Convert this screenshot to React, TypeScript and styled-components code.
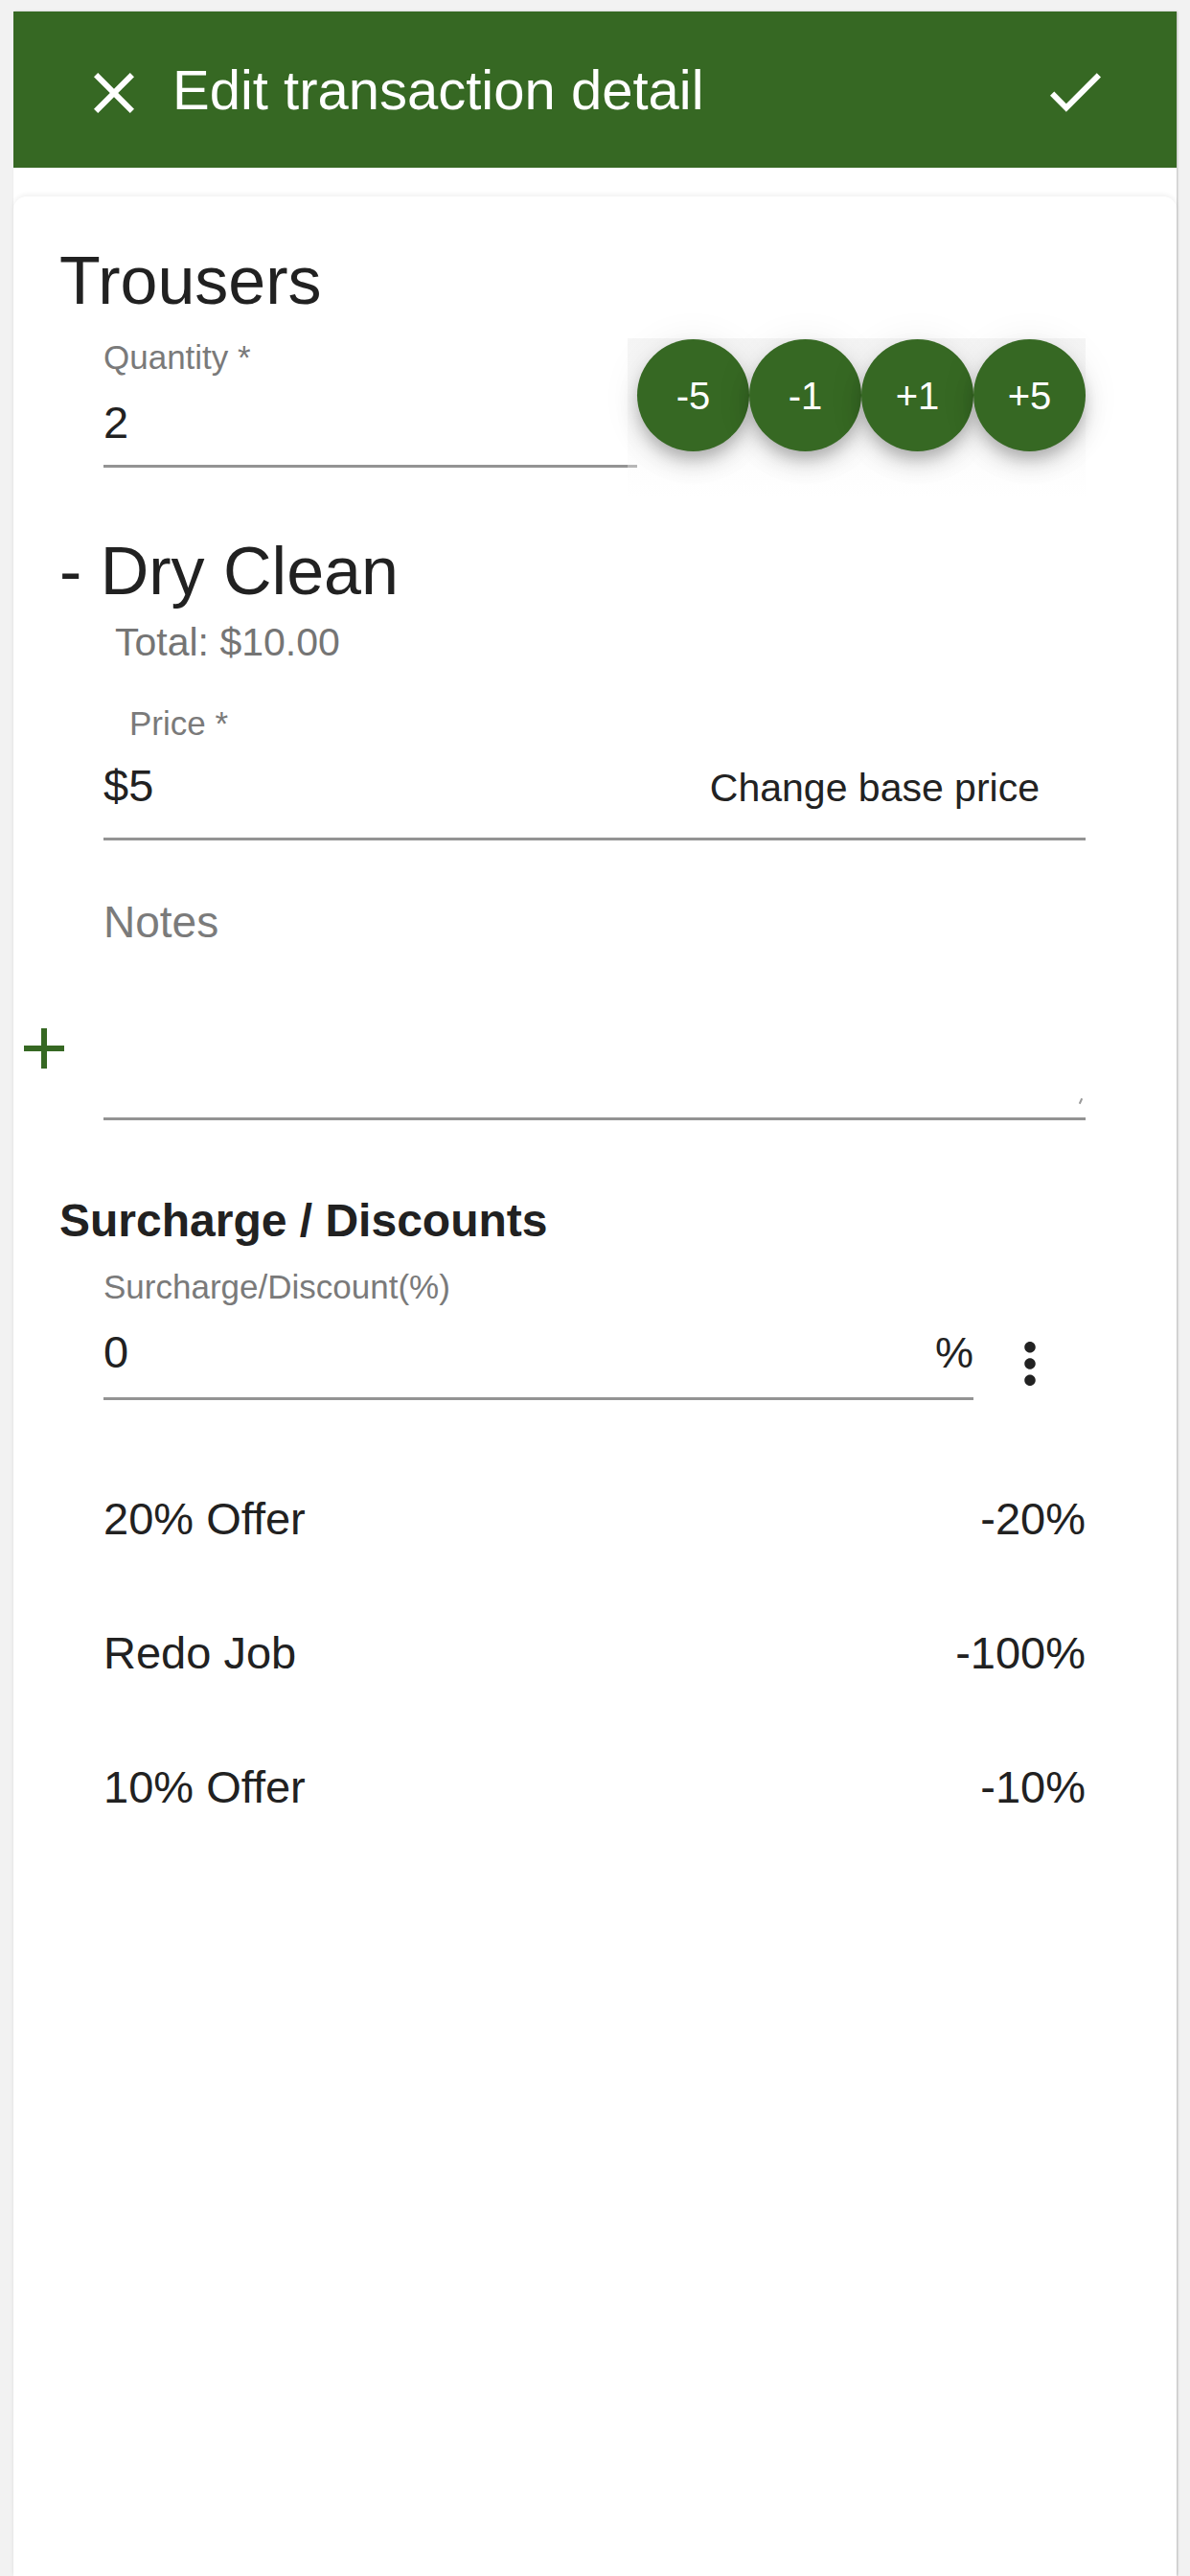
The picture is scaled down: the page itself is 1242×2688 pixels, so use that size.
import React from "react";
import styled, { createGlobalStyle } from "styled-components";

const GREEN = "#366823";

const Global = createGlobalStyle`
  html, body {
    margin: 0;
    padding: 0;
    background: #f2f2f2;
    font-family: "Liberation Sans", Arial, Helvetica, sans-serif;
    color: #212121;
  }
  * { box-sizing: border-box; }
`;

const Page = styled.div`
  min-height: 2688px;
  padding: 12px 14px 0;
  display: flex;
  flex-direction: column;
`;

const Shell = styled.div`
  flex: 1;
  background: #fff;
  display: flex;
  flex-direction: column;
  box-shadow: 1px 0 2px rgba(0, 0, 0, 0.22);
`;

const Header = styled.header`
  height: 163px;
  background: ${GREEN};
  display: flex;
  align-items: center;
  padding: 0 79px 0 84px;
  color: #fff;
`;

const IconButton = styled.button<{ $mt?: number }>`
  border: 0;
  background: none;
  padding: 0;
  margin: ${(p) => p.$mt ?? 0}px 0 0 0;
  display: flex;
  cursor: pointer;
  color: inherit;
`;

const Title = styled.h1`
  flex: 1;
  margin: 0 0 0 40px;
  font-size: 58px;
  line-height: 1;
  font-weight: 400;
  color: #fff;
`;

const Card = styled.main`
  flex: 1;
  margin-top: 30px;
  background: #fff;
  border-radius: 14px 14px 0 0;
  box-shadow: 0 -2px 5px rgba(0, 0, 0, 0.06);
  padding: 48px 48px 40px 48px;
  display: flex;
  flex-direction: column;
`;

const ItemTitle = styled.h2<{ $mt?: number }>`
  margin: ${(p) => p.$mt ?? 0}px 0 0 0;
  font-size: 70px;
  line-height: 80px;
  font-weight: 400;
  color: #212121;
`;

const SectionTitle = styled.h3`
  margin: 77px 0 0 0;
  font-size: 48px;
  line-height: 56px;
  font-weight: 700;
  color: #212121;
`;

const Total = styled.div`
  margin: 10px 0 0 58px;
  font-size: 41px;
  line-height: 48px;
  color: #757575;
`;

const FieldRow = styled.div<{ $mt: number }>`
  margin-top: ${(p) => p.$mt}px;
  padding: 0 47px 0 46px;
  display: flex;
  align-items: flex-start;
`;

const Field = styled.div`
  flex: 1;
  min-width: 0;
  display: flex;
  flex-direction: column;
`;

const Label = styled.label<{ $indent?: number }>`
  display: block;
  padding-left: ${(p) => p.$indent ?? 0}px;
  font-size: 35px;
  line-height: 40px;
  color: #7a7a7a;
`;

const InputLine = styled.div<{ $mt: number; $pb: number }>`
  margin-top: ${(p) => p.$mt}px;
  padding-bottom: ${(p) => p.$pb}px;
  border-bottom: 3px solid #939393;
  display: flex;
  align-items: baseline;
  justify-content: space-between;
`;

const Value = styled.span`
  font-size: 47px;
  line-height: 56px;
  color: #212121;
`;

const Adornment = styled.span<{ $size: number; $mr?: number }>`
  font-size: ${(p) => p.$size}px;
  line-height: 56px;
  color: #222;
  margin-right: ${(p) => p.$mr ?? 0}px;
`;

const StepGroup = styled.div`
  position: relative;
  display: flex;
  margin-top: 1px;
  &::before {
    content: "";
    position: absolute;
    left: -10px;
    right: 0;
    top: -1px;
    height: 165px;
    background: linear-gradient(
      180deg,
      #f5f5f5 0%,
      #f9f9f9 45%,
      rgba(255, 255, 255, 0) 100%
    );
    z-index: 0;
  }
`;

const StepButton = styled.button`
  position: relative;
  z-index: 1;
  width: 117px;
  height: 117px;
  border-radius: 50%;
  border: 0;
  background: ${GREEN};
  color: #fff;
  font-family: "Liberation Sans", Arial, sans-serif;
  font-size: 40px;
  line-height: 1;
  display: flex;
  align-items: center;
  justify-content: center;
  padding: 0;
  box-shadow: 0 9px 15px -3px rgba(0, 0, 0, 0.2),
    0 14px 24px 0 rgba(0, 0, 0, 0.12), 0 3px 40px 0 rgba(0, 0, 0, 0.08);
`;

const NotesRow = styled.div`
  margin: 57px 47px 0 -37px;
  display: flex;
  align-items: flex-end;
  gap: 41px;
`;

const AddButton = styled.button`
  border: 0;
  background: none;
  padding: 0;
  margin-bottom: 54px;
  display: flex;
  color: ${GREEN};
  cursor: pointer;
`;

const NotesField = styled.div`
  position: relative;
  flex: 1;
  min-height: 235px;
  border-bottom: 3px solid #939393;
  &::after {
    content: "";
    position: absolute;
    right: 4px;
    bottom: 14px;
    width: 2px;
    height: 6px;
    background: #9a9a9a;
    transform: rotate(25deg);
  }
`;

const Placeholder = styled.div`
  font-size: 46px;
  line-height: 56px;
  color: #7b7b7b;
`;

const MenuSlot = styled.div`
  width: 117px;
  display: flex;
  justify-content: center;
  padding-top: 77px;
  color: #222;
`;

const OfferList = styled.ul`
  list-style: none;
  margin: 53px 0 0 0;
  padding: 0 47px 0 46px;
`;

const OfferItem = styled.li`
  height: 140px;
  display: flex;
  align-items: center;
  justify-content: space-between;
  font-size: 47px;
  color: #212121;
`;

const CloseIcon = () => (
  <svg width="42" height="42" viewBox="5 5 14 14" fill="currentColor">
    <path d="M19 6.41L17.59 5 12 10.59 6.41 5 5 6.41 10.59 12 5 17.59 6.41 19 12 13.41 17.59 19 19 17.59 13.41 12z" />
  </svg>
);

const CheckIcon = () => (
  <svg width="53" height="41" viewBox="3.41 5.59 17.59 13.41" fill="currentColor">
    <path d="M9 16.17L4.83 12l-1.42 1.41L9 19 21 7l-1.41-1.41z" />
  </svg>
);

const AddIcon = () => (
  <svg width="42" height="42" viewBox="5 5 14 14" fill="currentColor">
    <path d="M19 13h-6v6h-2v-6H5v-2h6V5h2v6h6v2z" />
  </svg>
);

const MoreIcon = () => (
  <svg width="12" height="46" viewBox="10 4 4 16" fill="currentColor">
    <path d="M12 8c1.1 0 2-.9 2-2s-.9-2-2-2-2 .9-2 2 .9 2 2 2zm0 2c-1.1 0-2 .9-2 2s.9 2 2 2 2-.9 2-2-.9-2-2-2zm0 6c-1.1 0-2 .9-2 2s.9 2 2 2 2-.9 2-2-.9-2-2-2z" />
  </svg>
);

const steps = ["-5", "-1", "+1", "+5"];
const offers = [
  { name: "20% Offer", value: "-20%" },
  { name: "Redo Job", value: "-100%" },
  { name: "10% Offer", value: "-10%" },
];

export default function App() {
  return (
    <>
      <Global />
      <Page>
        <Shell>
          <Header>
            <IconButton $mt={6} aria-label="close">
              <CloseIcon />
            </IconButton>
            <Title>Edit transaction detail</Title>
            <IconButton $mt={6} aria-label="save">
              <CheckIcon />
            </IconButton>
          </Header>
          <Card>
            <ItemTitle>Trousers</ItemTitle>
            <FieldRow $mt={20}>
              <Field>
                <Label>Quantity *</Label>
                <InputLine $mt={20} $pb={16}>
                  <Value>2</Value>
                </InputLine>
              </Field>
              <StepGroup>
                {steps.map((s) => (
                  <StepButton key={s}>{s}</StepButton>
                ))}
              </StepGroup>
            </FieldRow>

            <ItemTitle $mt={68}>- Dry Clean</ItemTitle>
            <Total>Total: $10.00</Total>

            <FieldRow $mt={41}>
              <Field>
                <Label $indent={27}>Price *</Label>
                <InputLine $mt={17} $pb={24}>
                  <Value>$5</Value>
                  <Adornment $size={41} $mr={48}>
                    Change base price
                  </Adornment>
                </InputLine>
              </Field>
            </FieldRow>

            <NotesRow>
              <AddButton aria-label="add">
                <AddIcon />
              </AddButton>
              <NotesField>
                <Placeholder>Notes</Placeholder>
              </NotesField>
            </NotesRow>

            <SectionTitle>Surcharge / Discounts</SectionTitle>
            <FieldRow $mt={21}>
              <Field>
                <Label>Surcharge/Discount(%)</Label>
                <InputLine $mt={20} $pb={18}>
                  <Value>0</Value>
                  <Adornment $size={45}>%</Adornment>
                </InputLine>
              </Field>
              <MenuSlot>
                <MoreIcon />
              </MenuSlot>
            </FieldRow>

            <OfferList>
              {offers.map((o) => (
                <OfferItem key={o.name}>
                  <span>{o.name}</span>
                  <span>{o.value}</span>
                </OfferItem>
              ))}
            </OfferList>
          </Card>
        </Shell>
      </Page>
    </>
  );
}
